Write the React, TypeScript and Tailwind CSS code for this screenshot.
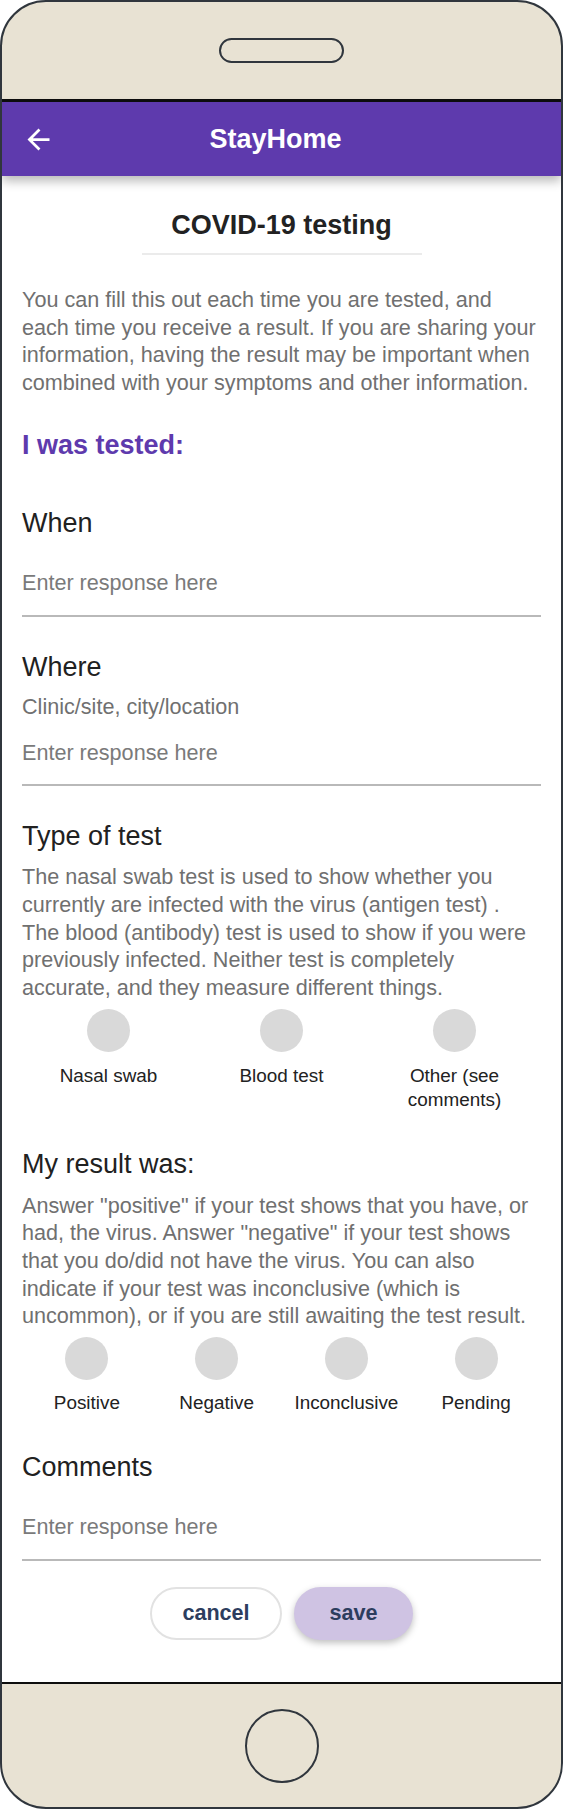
import React from 'react';

/* StayHome — COVID-19 testing form inside a phone frame */

const FONT = "font-['Liberation_Sans',Arial,sans-serif]";

function Heading({ children, className = '' }: { children: React.ReactNode; className?: string }) {
  return (
    <h2 className={`text-[27px] leading-[32px] font-normal text-[#212121] ${className}`}>{children}</h2>
  );
}

function Body({ children, className = '' }: { children: React.ReactNode; className?: string }) {
  return <p className={`text-[21.6px] leading-[27.7px] text-[#707070] ${className}`}>{children}</p>;
}

function Response({ className = '' }: { className?: string }) {
  return (
    <div className={`pb-[18px] border-b-2 border-[#b9b9b9] ${className}`}>
      <span className="block text-[21.6px] leading-[27.7px] text-[#7a7a7a]">Enter response here</span>
    </div>
  );
}

function Radios({ options, cols, className = '' }: { options: string[]; cols: 3 | 4; className?: string }) {
  return (
    <div className={`grid ${cols === 3 ? 'grid-cols-3' : 'grid-cols-4'} ${className}`}>
      {options.map((o) => (
        <div key={o} className="flex flex-col items-center">
          <span className="w-[43px] h-[43px] rounded-full bg-[#d9d9d9]" />
          <span className="mt-[11.8px] text-[18.9px] leading-[24.3px] text-[#222] text-center px-[18px]">{o}</span>
        </div>
      ))}
    </div>
  );
}

export default function App() {
  return (
    <div className={`w-[563px] h-[1809px] bg-white ${FONT}`}>
      <div className="w-[563px] h-[1809px] rounded-[46px] border-2 border-[#30363d] bg-[#e8e2d3] overflow-hidden flex flex-col">
        {/* top bezel + speaker */}
        <div className="h-[97px] flex items-center justify-center">
          <span className="w-[125px] h-[25px] rounded-full border-[2.5px] border-[#30363d]" />
        </div>
        <div className="h-[3px] bg-[#0d0d0d]" />

        {/* app bar */}
        <header className="relative z-10 h-[74px] bg-[#5e3aad] flex items-center pl-[19.5px] shadow-[0_5px_10px_rgba(0,0,0,0.28)]">
          <svg width="33" height="33" viewBox="0 0 24 24" fill="#fff" aria-hidden="true">
            <path d="M20 11H7.83l5.59-5.59L12 4l-8 8 8 8 1.41-1.41L7.83 13H20v-2z" />
          </svg>
          <h1 className="flex-1 pr-[64.5px] text-center text-white text-[27px] font-bold leading-[32px]">StayHome</h1>
        </header>

        {/* screen */}
        <main className="flex-1 bg-white px-[20px] flex flex-col">
          <div className="pt-[33px] flex justify-center">
            <h1 className="w-[280px] text-center text-[27px] leading-[32px] font-bold text-[#222] pb-[12px] border-b-2 border-[#ebebeb]">
              COVID-19 testing
            </h1>
          </div>

          <Body className="mt-[31px]">
            You can fill this out each time you are tested, and each time you receive a result. If you are sharing your
            information, having the result may be important when combined with your symptoms and other information.
          </Body>

          <h2 className="mt-[32px] text-[27px] leading-[32px] font-bold text-[#5e3aad]">I was tested:</h2>

          <Heading className="mt-[46px]">When</Heading>
          <Response className="mt-[30px]" />

          <Heading className="mt-[34px]">Where</Heading>
          <Body className="mt-[10px] text-[#777]">Clinic/site, city/location</Body>
          <Response className="mt-[18.3px]" />

          <Heading className="mt-[34px]">Type of test</Heading>
          <Body className="mt-[11px]">
            The nasal swab test is used to show whether you currently are infected with the virus (antigen test) . The
            blood (antibody) test is used to show if you were previously infected. Neither test is completely accurate,
            and they measure different things.
          </Body>
          <Radios className="mt-[7.5px]" cols={3} options={['Nasal swab', 'Blood test', 'Other (see comments)']} />

          <Heading className="mt-[35.6px]">My result was:</Heading>
          <Body className="mt-[11.4px]">
            Answer &quot;positive&quot; if your test shows that you have, or had, the virus. Answer &quot;negative&quot; if
            your test shows that you do/did not have the virus. You can also indicate if your test was inconclusive
            (which is uncommon), or if you are still awaiting the test result.
          </Body>
          <Radios
            className="mt-[6.8px] [&_span+span]:mt-[10.8px]"
            cols={4}
            options={['Positive', 'Negative', 'Inconclusive', 'Pending']}
          />

          <Heading className="mt-[36.2px]">Comments</Heading>
          <Response className="mt-[30px]" />

          <div className="mt-[26px] flex justify-center gap-[12px]">
            <button className="w-[132px] h-[53px] rounded-full border-2 border-[#e2e2e2] bg-white text-[21.6px] font-bold text-[#2d3d5e]">
              cancel
            </button>
            <button className="w-[119px] h-[53px] rounded-full bg-[#cfc3e3] text-[21.6px] font-bold text-[#2d3d5e] shadow-[0_3px_7px_rgba(0,0,0,0.25)]">
              save
            </button>
          </div>
        </main>

        <div className="h-[2px] bg-[#0d0d0d]" />
        {/* bottom bezel + home button */}
        <div className="h-[123px] flex items-center justify-center">
          <span className="w-[74px] h-[74px] rounded-full border-[2.5px] border-[#30363d]" />
        </div>
      </div>
    </div>
  );
}
